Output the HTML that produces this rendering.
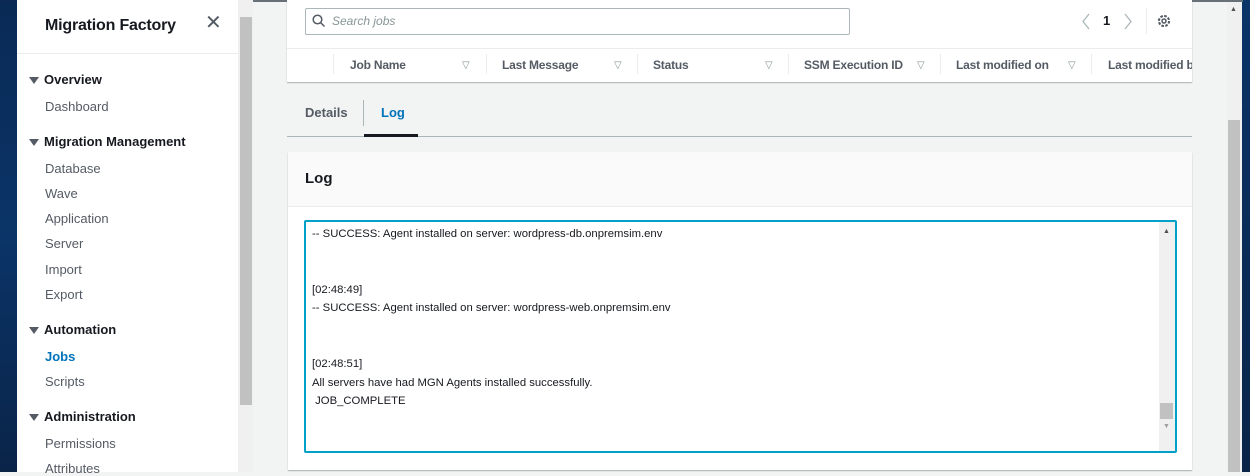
<!DOCTYPE html>
<html><head><meta charset="utf-8"><style>
*{box-sizing:border-box;margin:0;padding:0}
body{width:1250px;height:472px;overflow:hidden;position:relative;background:#f2f3f3;font-family:"Liberation Sans","DejaVu Sans",sans-serif;color:#16191f}
.abs{position:absolute}
.desk{left:0;top:0;width:17px;height:472px;background:linear-gradient(#0a2a55,#0b3468 50%,#0a2448)}
.deskr{left:1242px;top:0;width:8px;height:472px;background:linear-gradient(#0b3468,#0a2448)}
.side{left:17px;top:0;width:221px;height:472px;background:#fff}
.sb{left:238px;top:0;width:15px;height:472px;background:#f0f0f0}
.sbt{left:240px;top:17px;width:12px;height:388px;background:#c1c1c1}
.rsb{left:1227px;top:0;width:15px;height:472px;background:#f0f0f0}
.rsbt{left:1228px;top:120px;width:12px;height:352px;background:#c1c1c1}
.nav{font-size:13px;color:#545b64}
.navh{font-size:13px;font-weight:bold;color:#16191f}
.tri{width:0;height:0;border-left:5px solid transparent;border-right:5px solid transparent;border-top:7px solid #545b64}
.card{background:#fff;box-shadow:0 1px 1px rgba(0,28,36,.3)}
.th{font-size:12px;font-weight:bold;color:#545b64;top:58px;letter-spacing:-0.2px}
.ft{top:60px;font-size:10px;color:#879596}
.sep{top:54px;width:1px;height:20px;background:#eaeded}
.log{font-size:11.3px;color:#16191f}
</style></head><body>
<div class="abs desk"></div>
<div class="abs side"></div>
<div class="abs" style="left:17px;top:53px;width:221px;height:1px;background:#eaeded"></div>
<div class="abs" style="left:45px;top:17px;font-size:16px;font-weight:bold;letter-spacing:-0.2px">Migration Factory</div>
<div class="abs" style="left:205px;top:13px;font-size:20px;color:#545b64;line-height:1">&#x2715;</div>

<div class="abs tri" style="left:29px;top:77px"></div><div class="abs navh" style="left:44px;top:72px">Overview</div>
<div class="abs nav" style="left:45px;top:99px">Dashboard</div>
<div class="abs tri" style="left:29px;top:139px"></div><div class="abs navh" style="left:44px;top:134px">Migration Management</div>
<div class="abs nav" style="left:45px;top:161px">Database</div>
<div class="abs nav" style="left:45px;top:186px">Wave</div>
<div class="abs nav" style="left:45px;top:211px">Application</div>
<div class="abs nav" style="left:45px;top:236px">Server</div>
<div class="abs nav" style="left:45px;top:262px">Import</div>
<div class="abs nav" style="left:45px;top:287px">Export</div>
<div class="abs tri" style="left:29px;top:327px"></div><div class="abs navh" style="left:44px;top:322px">Automation</div>
<div class="abs nav" style="left:45px;top:349px;color:#0073bb;font-weight:bold">Jobs</div>
<div class="abs nav" style="left:45px;top:374px">Scripts</div>
<div class="abs tri" style="left:29px;top:414px"></div><div class="abs navh" style="left:44px;top:409px">Administration</div>
<div class="abs nav" style="left:45px;top:436px">Permissions</div>
<div class="abs nav" style="left:45px;top:461px">Attributes</div>

<div class="abs sb"></div><div class="abs sbt"></div>
<div class="abs rsb"></div><div class="abs rsbt"></div>
<div class="abs" style="left:1230px;top:6px;font-size:7px;color:#505050">&#x25B2;</div>
<div class="abs deskr"></div>
<div class="abs" style="left:253px;top:0;width:990px;height:2px;background:#687078"></div>

<div class="abs card" style="left:287px;top:0;width:905px;height:82px"></div>
<div class="abs" style="left:287px;top:48px;width:905px;height:1px;background:#eaeded"></div>
<div class="abs" style="left:305px;top:8px;width:545px;height:27px;border:1px solid #aab7b8;border-radius:2px;background:#fff"></div>
<svg class="abs" style="left:312px;top:14px" width="14" height="14"><circle cx="5.5" cy="5.5" r="4.3" fill="none" stroke="#545b64" stroke-width="1.5"/><line x1="8.5" y1="8.5" x2="12.5" y2="12.5" stroke="#545b64" stroke-width="1.5"/></svg>
<div class="abs" style="left:332px;top:14px;font-size:12px;font-style:italic;color:#879596">Search jobs</div>
<svg class="abs" style="left:1080px;top:13px" width="60" height="17"><polyline points="9,1 3,8.5 9,16" fill="none" stroke="#aab7b8" stroke-width="1.3"/><polyline points="45,1 51,8.5 45,16" fill="none" stroke="#aab7b8" stroke-width="1.3"/></svg>
<div class="abs" style="left:1103px;top:13px;font-size:13px;font-weight:bold">1</div>
<div class="abs" style="left:1146px;top:8px;width:1px;height:26px;background:#eaeded"></div>
<svg class="abs" style="left:1157px;top:14px" width="14" height="14"><circle cx="7" cy="7" r="5" fill="none" stroke="#545b64" stroke-width="2.2" stroke-dasharray="2.6 1.33"/><circle cx="7" cy="7" r="4" fill="#fff"/><circle cx="7" cy="7" r="2" fill="none" stroke="#545b64" stroke-width="1.5"/></svg>

<div class="abs sep" style="left:333px"></div>
<div class="abs th" style="left:350px">Job Name</div><div class="abs ft" style="left:462px">&#x25BD;</div>
<div class="abs sep" style="left:486px"></div>
<div class="abs th" style="left:502px">Last Message</div><div class="abs ft" style="left:614px">&#x25BD;</div>
<div class="abs sep" style="left:637px"></div>
<div class="abs th" style="left:653px">Status</div><div class="abs ft" style="left:765px">&#x25BD;</div>
<div class="abs sep" style="left:788px"></div>
<div class="abs th" style="left:804px">SSM Execution ID</div><div class="abs ft" style="left:917px">&#x25BD;</div>
<div class="abs sep" style="left:940px"></div>
<div class="abs th" style="left:956px">Last modified on</div><div class="abs ft" style="left:1068px">&#x25BD;</div>
<div class="abs sep" style="left:1091px"></div>
<div class="abs th" style="left:1108px;width:84px;overflow:hidden;white-space:nowrap">Last modified by</div>

<div class="abs" style="left:305px;top:105px;font-size:13px;font-weight:bold;color:#545b64">Details</div>
<div class="abs" style="left:363px;top:100px;width:1px;height:26px;background:#aab7b8"></div>
<div class="abs" style="left:381px;top:105px;font-size:13px;font-weight:bold;color:#0073bb">Log</div>
<div class="abs" style="left:287px;top:136px;width:905px;height:1px;background:#aab7b8"></div>
<div class="abs" style="left:364px;top:134px;width:54px;height:3px;background:#16191f"></div>

<div class="abs card" style="left:288px;top:152px;width:904px;height:318px"></div>
<div class="abs" style="left:288px;top:152px;width:904px;height:55px;background:#fafafa;border-bottom:1px solid #eaeded"></div>
<div class="abs" style="left:305px;top:170px;font-size:15px;font-weight:bold">Log</div>
<div class="abs" style="left:304px;top:220px;width:873px;height:233px;border:2px solid #00a1c9;border-radius:2px;background:#fff"></div>
<div class="abs" style="left:1159px;top:222px;width:16px;height:229px;background:#f0f0f0"></div>
<div class="abs" style="left:1160px;top:403px;width:13px;height:16px;background:#c1c1c1"></div>
<div class="abs" style="left:1163px;top:228px;font-size:7px;color:#505050">&#x25B2;</div>
<div class="abs" style="left:1163px;top:423px;font-size:7px;color:#a0a0a0">&#x25BC;</div>
<div class="abs log" style="left:312px;top:228px">-- SUCCESS: Agent installed on server: wordpress-db.onpremsim.env</div>
<div class="abs log" style="left:312px;top:284px">[02:48:49]</div>
<div class="abs log" style="left:312px;top:302px">-- SUCCESS: Agent installed on server: wordpress-web.onpremsim.env</div>
<div class="abs log" style="left:312px;top:358px">[02:48:51]</div>
<div class="abs log" style="left:312px;top:377px">All servers have had MGN Agents installed successfully.</div>
<div class="abs log" style="left:312px;top:395px">&nbsp;JOB_COMPLETE</div>
</body></html>
